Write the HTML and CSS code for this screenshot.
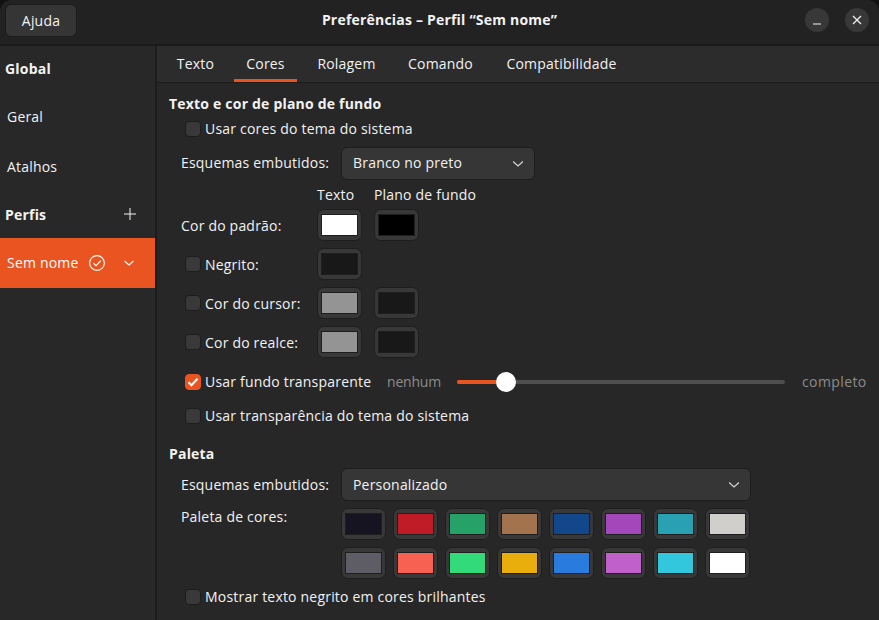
FILE: index.html
```html
<!DOCTYPE html>
<html lang="pt-BR">
<head>
   <meta charset="UTF-8">
   <meta name="viewport" content="width=device-width, initial-scale=1.0">
   <title>Preferências – Perfil “Sem nome”</title>
   <link rel="stylesheet" href="styles.css">
</head>
<body>
   <div class="window">
      <header class="titlebar">
         <button class="help-btn">Ajuda</button>
         <div class="title">Preferências – Perfil “Sem nome”</div>
         <div class="win-controls">
            <span class="win-btn">
               <svg width="12" height="12" viewBox="0 0 12 12"><path d="M2 10h8" stroke="#f2f2f2" stroke-width="1.2" fill="none"/></svg>
            </span>
            <span class="win-btn">
               <svg width="12" height="12" viewBox="0 0 12 12"><path d="M2 2l8 8M10 2l-8 8" stroke="#f2f2f2" stroke-width="1.2" fill="none"/></svg>
            </span>
         </div>
      </header>

      <div class="body-wrap">
         <aside class="sidebar">
            <div class="side-head">Global</div>
            <div class="side-item">Geral</div>
            <div class="side-item">Atalhos</div>
            <div class="side-head side-head-plus">
               <span>Perfis</span>
               <svg width="12" height="12" viewBox="0 0 12 12"><path d="M6 0v12M0 6h12" stroke="#f2f2f2" stroke-width="1" fill="none"/></svg>
            </div>
            <div class="side-item side-active">
               <span class="profile-name">Sem nome</span>
               <svg class="profile-check" width="16" height="16" viewBox="0 0 16 16"><circle cx="8" cy="8" r="7.4" stroke="#fff" stroke-width="1.1" fill="none"/><path d="M4.4 8.1l2.7 2.6 4.8-5" stroke="#fff" stroke-width="1.2" fill="none"/></svg>
               <svg class="profile-arrow" width="12" height="12" viewBox="0 0 12 12"><path d="M1.5 4l4.5 4 4.5-4" stroke="#fff" stroke-width="1.1" fill="none"/></svg>
            </div>
         </aside>

         <main class="content">
            <nav class="tabs">
               <a class="tab">Texto</a>
               <a class="tab tab-active">Cores</a>
               <a class="tab">Rolagem</a>
               <a class="tab">Comando</a>
               <a class="tab">Compatibilidade</a>
            </nav>

            <div class="panel">
               <h3 class="section-title">Texto e cor de plano de fundo</h3>
               <label class="check-row row-sys"><span class="check"></span>Usar cores do tema do sistema</label>

               <div class="select-row select-row-top">
                  <span class="field-label">Esquemas embutidos:</span>
                  <div class="select select-small">
                     <span>Branco no preto</span>
                     <svg width="10" height="6" viewBox="0 0 10 6"><path d="M0 .5l5 4.5 5-4.5" stroke="#dcdcdc" stroke-width="1.2" fill="none"/></svg>
                  </div>
               </div>

               <div class="color-head">
                  <span></span>
                  <span class="col-title">Texto</span>
                  <span class="col-title">Plano de fundo</span>
               </div>

               <div class="color-grid">
                  <span class="field-label">Cor do padrão:</span>
                  <span class="swatch"><i class="c-white"></i></span>
                  <span class="swatch"><i class="c-black"></i></span>

                  <label class="check-label"><span class="check"></span>Negrito:</label>
                  <span class="swatch"><i class="c-off"></i></span>
                  <span></span>

                  <label class="check-label"><span class="check"></span>Cor do cursor:</label>
                  <span class="swatch"><i class="c-gray"></i></span>
                  <span class="swatch"><i class="c-off"></i></span>

                  <label class="check-label"><span class="check"></span>Cor do realce:</label>
                  <span class="swatch"><i class="c-gray"></i></span>
                  <span class="swatch"><i class="c-off"></i></span>
               </div>

               <div class="transparent-row">
                  <label class="check-row check-wide"><span class="check check-on"><svg width="12" height="12" viewBox="0 0 12 12"><path d="M1.5 6.2l3 3 6-6.4" stroke="#fff" stroke-width="2" fill="none"/></svg></span>Usar fundo transparente</label>
                  <span class="dim dim-left">nenhum</span>
                  <div class="slider">
                     <div class="slider-fill"></div>
                     <div class="slider-thumb"></div>
                  </div>
                  <span class="dim dim-right">completo</span>
               </div>

               <label class="check-row row-tr"><span class="check"></span>Usar transparência do tema do sistema</label>

               <h3 class="section-title title-paleta">Paleta</h3>

               <div class="select-row select-row-pal">
                  <span class="field-label">Esquemas embutidos:</span>
                  <div class="select select-wide">
                     <span>Personalizado</span>
                     <svg width="10" height="6" viewBox="0 0 10 6"><path d="M0 .5l5 4.5 5-4.5" stroke="#dcdcdc" stroke-width="1.2" fill="none"/></svg>
                  </div>
               </div>

               <div class="palette-row">
                  <span class="field-label palette-label">Paleta de cores:</span>
                  <div class="palette">
                     <span class="swatch"><i style="background:#171421"></i></span>
                     <span class="swatch"><i style="background:#c01c28"></i></span>
                     <span class="swatch"><i style="background:#26a269"></i></span>
                     <span class="swatch"><i style="background:#a2734c"></i></span>
                     <span class="swatch"><i style="background:#12488b"></i></span>
                     <span class="swatch"><i style="background:#a347ba"></i></span>
                     <span class="swatch"><i style="background:#2aa1b3"></i></span>
                     <span class="swatch"><i style="background:#d0cfcc"></i></span>
                     <span class="swatch"><i style="background:#5e5c64"></i></span>
                     <span class="swatch"><i style="background:#f66151"></i></span>
                     <span class="swatch"><i style="background:#33da7a"></i></span>
                     <span class="swatch"><i style="background:#e9ad0c"></i></span>
                     <span class="swatch"><i style="background:#2a7bde"></i></span>
                     <span class="swatch"><i style="background:#c061cb"></i></span>
                     <span class="swatch"><i style="background:#33c7de"></i></span>
                     <span class="swatch"><i style="background:#ffffff"></i></span>
                  </div>
               </div>

               <label class="check-row row-bold"><span class="check"></span>Mostrar texto negrito em cores brilhantes</label>
            </div>
         </main>
      </div>
   </div>
</body>
</html>
```

FILE: styles.css
```css
* {
   margin: 0;
   padding: 0;
   box-sizing: border-box;
}

html, body {
   height: 100%;
   overflow: hidden;
   background-color: #111;
}

body {
   font-family: "Open Sans", "Noto Sans", sans-serif;
   font-size: 14px;
   letter-spacing: 0.2px;
   color: #f2f2f2;
}

.window {
   width: 879px;
   height: 620px;
   display: flex;
   flex-direction: column;
   background-color: #272727;
   border-radius: 12px 12px 0 0;
   overflow: hidden;
}

/* Barra de titulo */
.titlebar {
   position: relative;
   flex: none;
   height: 46px;
   display: flex;
   align-items: center;
   justify-content: space-between;
   padding: 0 10px 4px 5px;
   background-color: #222;
   border-bottom: 2px solid #1a1a1a;
}

.help-btn {
   width: 72px;
   height: 33px;
   font: inherit;
   letter-spacing: inherit;
   color: #f2f2f2;
   background-color: #353535;
   border: 1px solid #1c1c1c;
   border-radius: 6px;
}

.title {
   position: absolute;
   left: 0;
   right: 0;
   top: 10px;
   text-align: center;
   font-weight: 700;
   pointer-events: none;
}

.win-controls {
   display: flex;
   gap: 16px;
}

.win-btn {
   width: 24px;
   height: 24px;
   display: flex;
   align-items: center;
   justify-content: center;
   border-radius: 50%;
   background-color: #383838;
}

.body-wrap {
   flex: 1;
   display: flex;
   min-height: 0;
}

/* Barra lateral */
.sidebar {
   flex: none;
   width: 157px;
   background-color: #282828;
   border-right: 2px solid #1c1c1c;
}

.side-head {
   height: 46px;
   display: flex;
   align-items: center;
   padding: 0 0 2px 5px;
   font-weight: 700;
}

.side-head-plus {
   justify-content: space-between;
   padding-right: 19px;
}

.side-item {
   height: 50px;
   display: flex;
   align-items: center;
   padding: 0 0 2px 7px;
}

.side-item svg {
   margin-top: 2px;
}

.side-active {
   background-color: #e95420;
   color: #fff;
}

.profile-name {
   width: 82px;
}

.profile-arrow {
   margin-left: 18px;
}

/* Conteudo */
.content {
   flex: 1;
   min-width: 0;
   display: flex;
   flex-direction: column;
}

.tabs {
   flex: none;
   height: 37px;
   display: grid;
   grid-template-columns: 61px 63px 83px 89px 137px;
   gap: 8px;
   padding-left: 8px;
   background-color: #2c2c2c;
   border-bottom: 1px solid #1c1c1c;
}

.tab {
   text-align: center;
   line-height: 35px;
   border-bottom: 3px solid transparent;
   height: 36px;
   white-space: nowrap;
}

.tab-active {
   border-bottom-color: #e95420;
}

.panel {
   flex: 1;
   padding: 9px 12px 0;
}

.section-title {
   height: 24px;
   line-height: 24px;
   font-size: 14px;
   font-weight: 700;
}

.check-row,
.check-label {
   display: flex;
   align-items: center;
   height: 24px;
}

.check-row {
   margin-left: 16px;
   margin-top: 1px;
   padding-bottom: 2px;
}

.check {
   flex: none;
   width: 16px;
   height: 16px;
   margin-right: 4px;
   display: flex;
   align-items: center;
   justify-content: center;
   background-color: #393939;
   border: 1px solid #1d1d1d;
   border-radius: 4px;
}

.check-row .check {
   margin-top: 2px;
}

.check-on {
   background-color: #e95420;
   border-color: #e95420;
}

.field-label {
   flex: none;
   display: block;
}

.select-row {
   display: flex;
   align-items: center;
   margin-top: 6px;
   margin-left: 12px;
}

.select-row .field-label {
   width: 160px;
}

.select-row-top .field-label,
.select-row-top .select span {
   margin-bottom: 2px;
}

.select {
   height: 33px;
   display: flex;
   align-items: center;
   justify-content: space-between;
   padding: 0 11px;
   background-color: #363636;
   border: 1px solid #1d1d1d;
   border-radius: 6px;
}

.select-small {
   width: 194px;
}

.select-wide {
   width: 410px;
}

.color-head {
   display: grid;
   grid-template-columns: 124px 45px 110px;
   column-gap: 12px;
   height: 22px;
   line-height: 22px;
   margin: 4px 0 3px 12px;
}

.col-title {
   white-space: nowrap;
}

.color-grid {
   display: grid;
   grid-template-columns: 124px 45px 45px;
   grid-auto-rows: 32px;
   column-gap: 12px;
   row-gap: 7px;
   align-items: center;
   margin-left: 12px;
}

.color-grid .check-label {
   padding-left: 4px;
   white-space: nowrap;
}

.swatch {
   display: block;
   width: 45px;
   height: 32px;
   padding: 4px 3px;
   background-color: #383838;
   border: 1px solid #1e1e1e;
   border-radius: 7px;
}

.swatch i {
   display: block;
   width: 100%;
   height: 100%;
   border: 1px solid #1e1e1e;
}

.c-white { background-color: #fff; }
.c-black { background-color: #000; }
.c-off { background-color: #181818; }
.c-gray { background-color: #949494; }

.transparent-row {
   display: flex;
   align-items: center;
   height: 24px;
   margin: 12px 0 0 16px;
}

.check-wide {
   flex: none;
   width: 202px;
   margin: 0;
   white-space: nowrap;
}

.dim {
   color: #8c8c8c;
   flex: none;
   margin-bottom: 2px;
}

.dim-left {
   width: 70px;
   letter-spacing: -0.2px;
}

.dim-right {
   margin-left: 17px;
   letter-spacing: 0.4px;
}

.slider {
   position: relative;
   flex: none;
   width: 328px;
   height: 4px;
   background-color: #4f4f4f;
   border-radius: 2px;
}

.slider-fill {
   width: 49px;
   height: 4px;
   background-color: #e95420;
   border-radius: 2px;
}

.slider-thumb {
   position: absolute;
   left: 39px;
   top: -8px;
   width: 20px;
   height: 20px;
   background-color: #fff;
   border-radius: 50%;
}

.row-tr {
   margin-top: 10px;
}

.title-paleta {
   margin-top: 14px;
}

.select-row-pal {
   margin-top: 2px;
}

.palette-row {
   display: flex;
   margin: 7px 0 0 12px;
}

.palette-label {
   width: 160px;
   line-height: 18px;
}

.palette {
   display: grid;
   grid-template-columns: repeat(8, 45px);
   grid-auto-rows: 32px;
   column-gap: 7px;
   row-gap: 7px;
}

.row-bold {
   margin-top: 6px;
}
```
